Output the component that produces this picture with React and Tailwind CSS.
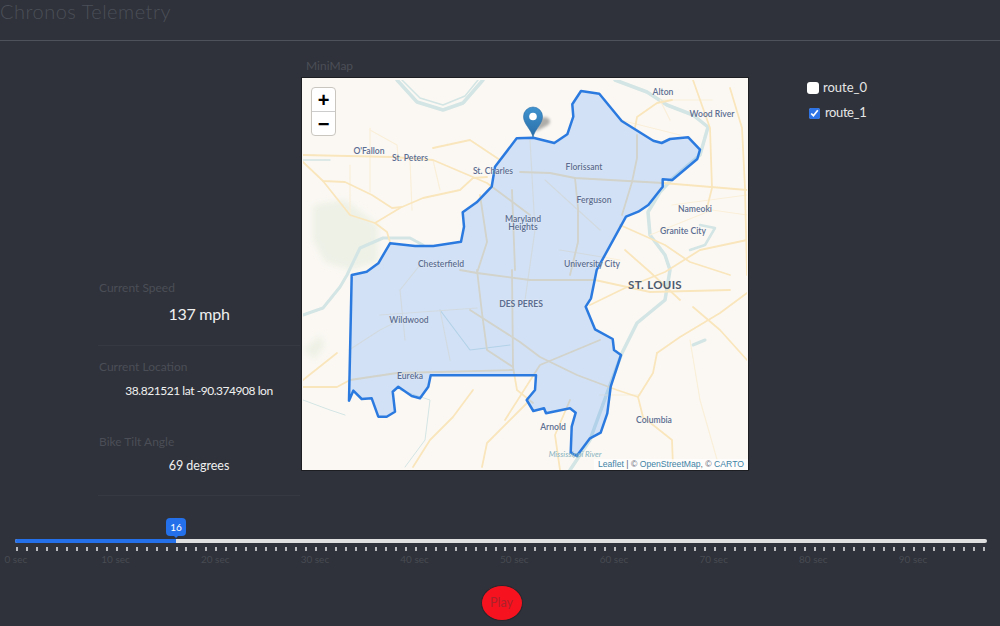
import React from "react";

const boundary = "351.7,275 366.7,271.7 378.3,263.3 390,243.3 415,246 433.3,246 461,241.7 464,226.7 462.7,212.3 476.7,202.3 491.7,186.7 495,166.7 516.7,138.3 533.3,137.7 554.3,143 567.3,134.3 573.3,116.7 572.3,104.3 581,91 599.3,93.7 621.7,121 653.3,140.7 661.7,143 670,139 688.3,137.3 700,149.7 697.3,159 672.3,180 662.7,179.3 662.7,186.7 648.3,205 638.3,211.7 626,216.7 596.7,270 591,298.3 585.7,306.7 595,329.3 612.7,339 614,350 621,355 610.7,386.7 607.3,413.3 600.7,432.7 590,438.3 576.7,456 570.7,452.7 571.7,426.7 575.7,412.7 570,408.3 546,413.3 544,408.3 533.3,411 526.7,400 535,390 536,375.3 430.7,375.3 428.3,386.7 420,398.3 411.7,396 398.3,386.7 392.7,391.7 395,411.7 386.7,416.7 378.3,416.7 371.7,398.3 361.7,399 353.3,390.7 349,400.7";

const majorRoads = [
  "303,155 393,157 433,160 487,183 530,215",
  "303,162 323,181 345,182 372,195 392,208 402,207 423,198 460,190 473,178 487,177",
  "323,181 350,215 375,223 400,208",
  "375,223 387,232 390,242",
  "433,148 470,140 500,160",
  "520,172 550,173 575,178 663,183 747,190",
  "637,135 637,158 632,182 622,215",
  "575,178 578,208 578,242 570,275",
  "635,128 637,117 657,103 672,100",
  "693,80 710,128 712,188 707,208",
  "730,88 742,128 745,188 747,275",
  "693,307 720,330 747,360",
  "657,353 680,337 720,313 747,293",
  "657,353 653,373 638,397 643,417 672,440 673,467",
  "638,397 617,390 577,375 540,357 520,342 470,310",
  "477,270 482,313 487,350 513,367 517,390 533,403",
  "512,270 513,367",
  "512,190 515,270",
  "480,195 487,242 477,273",
  "350,380 397,373 513,370",
  "303,387 337,387 350,380",
  "303,380 337,353",
  "473,390 453,417 430,440 413,467",
  "527,403 487,443 482,467",
  "460,270 477,273 530,280 595,280 650,292 730,290",
  "590,305 625,288 665,272 700,250 747,240",
  "620,225 665,245 690,262 730,275",
  "625,250 650,272 680,300",
  "570,400 555,435 560,470",
  "600,340 540,365 505,420",
];

const minorRoads = [
  "370,128 370,192",
  "370,130 397,145 398,157",
  "380,315 477,308",
  "349,350 380,330 400,320",
  "433,160 440,190",
  "350,165 350,215",
  "410,160 412,210",
  "530,140 535,230 525,300",
  "545,180 600,230",
  "420,265 400,290 405,340",
  "620,120 680,135",
  "560,250 620,260",
  "440,310 450,360",
  "650,235 712,210 747,215",
  "672,205 747,195",
  "670,120 660,100 712,100",
  "690,340 700,400 720,470",
  "600,395 640,395",
];

const labels = [
  ["O'Fallon", 369, 154, 600],
  ["St. Peters", 410, 161, 600],
  ["St. Charles", 493, 174, 600],
  ["Maryland", 523, 222, 600],
  ["Heights", 523, 230, 600],
  ["Florissant", 584, 170, 600],
  ["Ferguson", 594, 203, 600],
  ["University City", 592, 267, 600],
  ["Alton", 663, 95, 600],
  ["Wood River", 712, 117, 600],
  ["Nameoki", 695, 212, 600],
  ["Granite City", 683, 234, 600],
  ["Chesterfield", 441, 267, 600],
  ["Wildwood", 409, 323, 600],
  ["DES PERES", 521, 307, 700],
  ["Eureka", 410, 379, 600],
  ["Columbia", 654, 423, 600],
  ["Arnold", 553, 430, 600],
];

function MapDrawing() {
  return (
    <svg viewBox="302 78 446 392" className="block w-full h-full">
      <defs>
        <linearGradient id="pin" x1="0" y1="0" x2="0" y2="1">
          <stop offset="0" stopColor="#3f93cf" />
          <stop offset="1" stopColor="#2a6ea8" />
        </linearGradient>
        <filter id="soft" x="-20%" y="-20%" width="140%" height="140%"><feGaussianBlur stdDeviation="3" /></filter>
        <filter id="shadow" x="-30%" y="-30%" width="160%" height="160%"><feGaussianBlur stdDeviation="1.5" /></filter>
        <filter id="base" x="0" y="0" width="100%" height="100%"><feGaussianBlur stdDeviation="0.35" /></filter>
      </defs>
      <rect x="302" y="78" width="446" height="392" fill="#fbf8f3" />
      <g filter="url(#base)">
        <path d="M313,205 L345,200 L378,225 L378,262 L350,270 L325,262 L313,240 Z" fill="#edf1e6" filter="url(#soft)" />
        <path d="M303,350 L320,335 L325,345 L315,360 Z" fill="#eef1e6" filter="url(#soft)" />
        <g fill="none" strokeLinecap="round" strokeLinejoin="round" stroke="#d3e5e4">
          <polyline points="397,80 417,102 443,110 463,103 483,80" strokeWidth="3.5" />
          <polyline points="402,80 420,98 443,105 465,96 478,80" strokeWidth="1.5" />
          <polyline points="303,315 323,308 340,287 347,275 360,248 383,238 410,238 423,245" strokeWidth="3" />
          <polyline points="615,80 647,92 667,105 693,115 708,127 700,155 673,178 660,192 648,212 650,235 665,255 670,270 665,300 637,323 622,353 610,385 590,440 570,470" strokeWidth="3.5" />
          <polyline points="700,225 715,228 705,245 690,250" strokeWidth="2.5" />
          <polyline points="693,345 705,340" strokeWidth="3" />
          <polyline points="303,160 330,160" strokeWidth="1.5" />
          <polyline points="400,390 430,400 425,440 405,467" strokeWidth="1" />
          <polyline points="303,400 330,410 345,415" strokeWidth="1" />
          <polyline points="440,310 470,350 510,345" strokeWidth="1.2" />
        </g>
        <g fill="none" strokeLinecap="round" strokeLinejoin="round">
          {minorRoads.map((p, i) => <polyline key={i} points={p} stroke="#faefd9" strokeWidth="1.2" />)}
          {majorRoads.map((p, i) => <polyline key={i} points={p} stroke="#fae6bd" strokeWidth="1.8" />)}
        </g>
      </g>
      <polygon points={boundary} fill="#3388ff" fillOpacity="0.2" stroke="#2b7ae0" strokeWidth="2.5" strokeLinejoin="round" />
      {labels.map(([t, x, y, w]) => (
        <text key={t} x={x} y={y} textAnchor="middle" fontSize="8.6" fontWeight={w} fontFamily="Lato, sans-serif" fill="#5b6d90" stroke="#ffffff" strokeOpacity="0.3" strokeWidth="1" paintOrder="stroke">{t}</text>
      ))}
      <text x="655" y="289" textAnchor="middle" fontSize="11.5" fontWeight="700" fontFamily="Lato, sans-serif" letterSpacing="0.3" fill="#4d5a70">ST. LOUIS</text>
      <text x="575" y="456.5" textAnchor="middle" fontSize="7.8" fontStyle="italic" fontFamily="Lato, sans-serif" fill="#86b3c0">Mississippi River</text>
      <path d="M535,132 L548,125 Q553,120 546,117 L541,118 Z" fill="#000" fillOpacity="0.3" filter="url(#shadow)" />
      <path d="M533,137 C531,129 523.5,124 523.5,116.5 A9.5,9.5 0 0 1 542.5,116.5 C542.5,124 535,129 533,137 Z" fill="url(#pin)" stroke="#2a6ea8" strokeWidth="0.6" />
      <circle cx="533" cy="116.5" r="3.8" fill="#fff" />
    </svg>
  );
}

const ticks = Array.from({ length: 98 }, (_, i) => i);
const secLabels = [0, 10, 20, 30, 40, 50, 60, 70, 80, 90];

export default function App() {
  return (
    <div className="h-[626px] w-[1000px] overflow-hidden bg-[#2f323a] font-[Lato,sans-serif] flex flex-col">
      <header className="h-[41px] border-b border-[#4e525b]">
        <h1 className="text-[20px] leading-[22px] font-light text-[#4b4f58] tracking-[0.5px]">Chronos Telemetry</h1>
      </header>

      <main className="h-[455px] flex">
        <section className="w-[202px] ml-[98px] mr-[2px] flex flex-col justify-end">
          <div className="border-b border-[#363941]">
            <div className="text-[12px] leading-[16px] text-[#4b4e57] pl-px">Current Speed</div>
            <div className="text-center text-[#f0f0f0] text-[16px] leading-[22px] tracking-[-0.25px] mt-[7px] pb-[20px]">137 mph</div>
          </div>
          <div className="h-[13px]" />
          <div>
            <div className="text-[12px] leading-[16px] text-[#4b4e57] pl-px">Current Location</div>
            <div className="text-center text-[#f0f0f0] text-[12px] leading-[18px] tracking-[-0.45px] mt-[7px] pb-[34px]">38.821521 lat -90.374908 lon</div>
          </div>
          <div className="border-b border-[#363941]">
            <div className="text-[12px] leading-[16px] text-[#4b4e57] pl-px">Bike Tilt Angle</div>
            <div className="text-center text-[#f0f0f0] text-[12.5px] leading-[18px] mt-[7px] pb-[20px]">69 degrees</div>
          </div>
        </section>

        <section className="w-[446px] pt-[17px]">
          <div className="text-[12px] leading-[16px] pl-[4px] text-[#4b4e57] mb-[4px]">MiniMap</div>
          <div className="relative h-[392px] w-[446px] outline outline-1 outline-[#1d1e22]">
            <MapDrawing />
            <div className="absolute left-[9px] top-[9px] w-[25px] rounded-[4px] border border-[#c9c6c0] bg-white overflow-hidden">
              <div className="h-[24px] flex items-center justify-center border-b border-[#ccc] text-black text-[20px] font-bold leading-none font-['Liberation_Sans',sans-serif]">+</div>
              <div className="h-[23px] flex items-center justify-center text-black text-[20px] font-bold leading-none font-['Liberation_Sans',sans-serif]">−</div>
            </div>
            <div className="absolute right-0 bottom-0 h-[11px] px-[4px] bg-white/70 text-[8.65px] leading-[11px] whitespace-nowrap text-[#667] font-['Liberation_Sans',sans-serif]">
              <span className="text-[#3f84a6]">Leaflet</span> | © <span className="text-[#3f84a6]">OpenStreetMap</span>, © <span className="text-[#3f84a6]">CARTO</span>
            </div>
          </div>
        </section>

        <section className="pt-[38px] pl-[59px] text-[13px] text-[#e6e6e6]">
          <label className="flex items-center h-[18px]">
            <input type="checkbox" readOnly className="w-[12px] h-[12px] appearance-none bg-white rounded-[3px] mr-[4px]" />
            route_0
          </label>
          <label className="flex items-center h-[18px] mt-[7px] pl-[2px] tracking-[-0.4px]">
            <input type="checkbox" checked readOnly className="w-[11px] h-[11px] m-0 accent-[#2f74e6] mr-[5px]" />
            route_1
          </label>
        </section>
      </main>

      <section className="relative h-[79px] pt-[43px] px-[15px]">
        <div className="absolute left-[166px] top-[22px] w-[20px] h-[18px] rounded-[4px] bg-[#2470ea] text-white text-[10px] font-normal leading-[18px] text-center">
          16
          <div className="absolute left-[7px] top-[17px] w-0 h-0 border-x-[3px] border-x-transparent border-t-[3px] border-t-[#2470ea]" />
        </div>
        <div className="h-[4px] w-[972px] rounded-[2px] bg-[#e0e0e0] flex overflow-hidden">
          <div className="h-full w-[161px] bg-[#2470ea]" />
        </div>
        <div className="mt-[4px] h-[4px] w-[971px] pl-px flex justify-between">
          {ticks.map((i) => <div key={i} className="w-[2px] h-[4px] bg-[#b9babd]" />)}
        </div>
        <div className="flex mt-[2px] -ml-[49px] text-[10px] leading-[12px] text-[#484b53]">
          {secLabels.map((s) => <div key={s} className="w-[99.7px] shrink-0 text-center">{s} sec</div>)}
        </div>
      </section>

      <footer className="flex justify-center pt-[10px] pl-[3px]">
        <button className="w-[42px] h-[36px] rounded-[50%] bg-[#f6131f] border border-[#26282e] text-[12.5px] text-[#ad212b]">Play</button>
      </footer>
    </div>
  );
}
